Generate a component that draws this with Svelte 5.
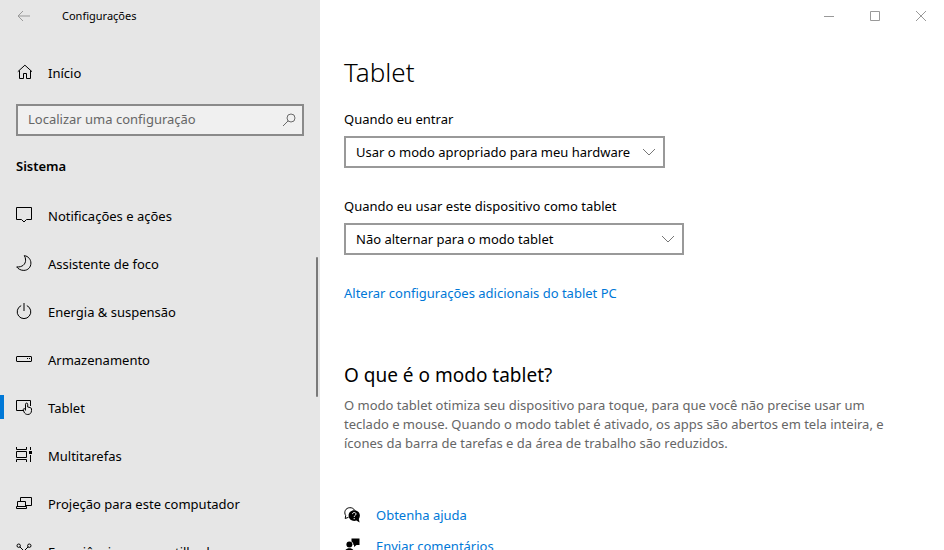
<script lang="ts">
  type NavItem = { id: string; label: string };

  const items: NavItem[] = [
    { id: 'notifications', label: 'Notificações e ações' },
    { id: 'focus', label: 'Assistente de foco' },
    { id: 'power', label: 'Energia & suspensão' },
    { id: 'storage', label: 'Armazenamento' },
    { id: 'tablet', label: 'Tablet' },
    { id: 'multitasking', label: 'Multitarefas' },
    { id: 'projecting', label: 'Projeção para este computador' },
    { id: 'shared', label: 'Experiências compartilhadas' },
  ];

  const signInModes = [
    'Usar o modo apropriado para meu hardware',
    'Sempre usar o modo tablet',
    'Nunca usar o modo tablet',
  ];
  const switchModes = [
    'Não alternar para o modo tablet',
    'Sempre alternar para o modo tablet',
    'Perguntar antes de alternar os modos',
  ];

  let current = $state('tablet');
  let query = $state('');
  let signInMode = $state(signInModes[0]);
  let switchMode = $state(switchModes[0]);
</script>

{#snippet icon(name: string)}
  <svg class="icon" viewBox="0 0 16 16" aria-hidden="true">
    {#if name === 'home'}
      <path d="M1.8 7.7L8.9 1.2L16 7.7M3.5 6.5V14.5H7.5V9.5H10.5V14.5H14.5V6.5" />
    {:else if name === 'notifications'}
      <path d="M.5 .5H15.5V12.5H10.5L8 15L5.5 12.5H.5Z" />
    {:else if name === 'focus'}
      <path d="M8.3 .6C12.3 1.2 14.9 4.4 14.9 8.1C14.9 12.3 11.9 15.4 7.8 15.4C4.8 15.4 2.2 14 .7 11.9C6.2 12.4 9.6 9.3 9.6 5.2C9.6 3.5 9.2 1.9 8.3 .6Z" />
    {:else if name === 'power'}
      <path d="M5.2 2.6A6.8 6.8 0 1 0 10.8 2.6" />
      <path d="M8 0V8" />
    {:else if name === 'storage'}
      <rect x=".5" y="5.5" width="15" height="5" rx=".5" />
      <path d="M11 7.5H12M13 7.5H14" />
    {:else if name === 'tablet'}
      <path d="M7 11.5H.5V1.5H14.5V7" />
      <path d="M9.5 11.5V5.2C9.5 3.7 11.7 3.7 11.7 5.2V8L14.3 8.6C15.1 8.8 15.5 9.3 15.5 10V11.6C15.5 14 14 15.5 11.8 15.5C9.9 15.5 8.6 14.4 8 13L7.3 10.8C7.1 9.4 8.6 9 9.5 10.8" />
    {:else if name === 'multitasking'}
      <path d="M.5 0V2.5H10.5V0M.5 15V12.5H10.5V15M.5 4.5H10.5V10.5H.5ZM14.5 0V3M14.5 8V15" />
      <path class="solid" d="M13 4H16V7H13Z" />
    {:else if name === 'projecting'}
      <path d="M4.5 6V2.5H15.5V10.5H10M1.5 11V6.5H9.5V11M.5 11.5H10.5V13.5H.5Z" />
    {:else if name === 'shared'}
      <circle cx="2.7" cy="2.7" r="1.7" />
      <circle cx="13.3" cy="2.7" r="1.7" />
      <circle cx="2.7" cy="13.3" r="1.7" />
      <circle cx="13.3" cy="13.3" r="1.7" />
      <path d="M3.9 3.9L12.1 12.1M12.1 3.9L3.9 12.1" />
    {:else if name === 'help'}
      <path d="M4.5 10.3L1.2 11.5L1.7 8.6C-.5 5 1.6 .8 5.8 .7C8 .6 9.7 1.6 10.6 3.2" />
      <path class="solid" d="M10.2 3.2C13.4 3.2 15.9 5.6 15.9 8.6C15.9 9.9 15.5 11 14.8 12L15.6 15.5L12.4 13.6C8.6 15 4.6 12.5 4.6 8.6C4.6 5.6 7 3.2 10.2 3.2Z" />
      <path class="cutout" d="M8.5 7.1C8.5 4.9 12 5 12 7.1C12 8.4 10.2 8.3 10.2 9.9M10.2 11V12.2" />
    {:else if name === 'feedback'}
      <path class="solid" d="M7.5 .5H15.5V7H12.5L10 9V7H9.5A3.7 3.7 0 0 0 7.5 3.6Z" />
      <circle class="solid" cx="5.4" cy="6.5" r="3" />
      <path class="solid" d="M.5 15.5C.5 12 2.5 10.2 5.4 10.2S10.3 12 10.3 15.5Z" />
    {/if}
  </svg>
{/snippet}

<div class="window">
  <aside class="sidebar">
    <header class="titlebar">
      <button class="back" aria-label="Voltar">
        <svg viewBox="0 0 14 12" aria-hidden="true"><path d="M6 1L1 6L6 11M1 6H13" /></svg>
      </button>
      <span class="app-name">Configurações</span>
    </header>

    <a class="nav-link home" href="#inicio">{@render icon('home')}<span>Início</span></a>

    <div class="search">
      <input type="text" aria-label="Localizar uma configuração" placeholder="Localizar uma configuração" bind:value={query} />
      <svg viewBox="0 0 14 14" aria-hidden="true"><circle cx="9" cy="5" r="4" /><path d="M6.2 7.8L1 13" /></svg>
    </div>

    <h2 class="group">Sistema</h2>

    <nav>
      {#each items as item (item.id)}
        <a
          class="nav-link"
          class:active={current === item.id}
          href={'#' + item.id}
          onclick={() => (current = item.id)}
        >
          {@render icon(item.id)}<span>{item.label}</span>
        </a>
      {/each}
      <div class="thumb"></div>
    </nav>
  </aside>

  <main>
    <div class="controls">
      <button aria-label="Minimizar"><svg viewBox="0 0 12 12"><path d="M1 6.5H11" /></svg></button>
      <button aria-label="Maximizar"><svg viewBox="0 0 12 12"><path d="M1.5 1.5H10.5V10.5H1.5Z" /></svg></button>
      <button aria-label="Fechar"><svg viewBox="0 0 12 12"><path d="M1 1L11 11M11 1L1 11" /></svg></button>
    </div>

    <div class="content">
      <h1>Tablet</h1>

      <div class="field">
        <label for="sign-in">Quando eu entrar</label>
        <div class="select">
          <select id="sign-in" bind:value={signInMode}>
            {#each signInModes as mode}
              <option value={mode}>{mode}</option>
            {/each}
          </select>
          <svg viewBox="0 0 14 8" aria-hidden="true"><path d="M1 1L7 7L13 1" /></svg>
        </div>
      </div>

      <div class="field">
        <label for="switch">Quando eu usar este dispositivo como tablet</label>
        <div class="select wide">
          <select id="switch" bind:value={switchMode}>
            {#each switchModes as mode}
              <option value={mode}>{mode}</option>
            {/each}
          </select>
          <svg viewBox="0 0 14 8" aria-hidden="true"><path d="M1 1L7 7L13 1" /></svg>
        </div>
      </div>

      <a class="link" href="#avancado">Alterar configurações adicionais do tablet PC</a>

      <section>
        <h2>O que é o modo tablet?</h2>
        <p>
          O modo tablet otimiza seu dispositivo para toque, para que você não precise usar um
          teclado e mouse. Quando o modo tablet é ativado, os apps são abertos em tela inteira, e
          ícones da barra de tarefas e da área de trabalho são reduzidos.
        </p>
      </section>

      <div class="support">
        <a class="link" href="#ajuda">{@render icon('help')}<span>Obtenha ajuda</span></a>
        <a class="link" href="#comentarios">{@render icon('feedback')}<span>Enviar comentários</span></a>
      </div>
    </div>
  </main>
</div>

<style>
  :global(body) {
    margin: 0;
    overflow: hidden;
  }

  .window {
    display: grid;
    grid-template-columns: 320px 1fr;
    height: 100vh;
    overflow: hidden;
    background: #fff;
    color: #000;
    font-family: "Segoe UI", "Noto Sans", "Open Sans", sans-serif;
    font-size: 13px;
    line-height: 20px;
  }

  h1,
  h2,
  p {
    margin: 0;
    font-weight: 400;
  }

  svg {
    flex: none;
    fill: none;
    stroke: currentColor;
  }

  button {
    display: flex;
    align-items: center;
    justify-content: center;
    padding: 0;
    border: 0;
    background: none;
    color: #999;
  }

  .icon {
    width: 16px;
    height: 16px;
  }

  .icon .solid {
    fill: currentColor;
    stroke: none;
  }

  .icon .cutout {
    stroke: #fff;
  }

  /* --- Sidebar --- */
  .sidebar {
    display: flex;
    flex-direction: column;
    min-height: 0;
    background: #e6e6e6;
  }

  .titlebar {
    display: flex;
    align-items: center;
    height: 32px;
    flex: none;
  }

  .back {
    width: 48px;
    height: 32px;
  }

  .back svg {
    width: 14px;
    height: 12px;
  }

  .app-name {
    margin-left: 14px;
    font-size: 11px;
  }

  .nav-link {
    position: relative;
    display: flex;
    align-items: center;
    gap: 16px;
    height: 48px;
    padding: 0 16px;
    color: #000;
    text-decoration: none;
    white-space: nowrap;
  }

  .nav-link .icon {
    margin-bottom: 2px;
  }

  .nav-link.active::before {
    content: "";
    position: absolute;
    left: 0;
    top: 11px;
    width: 4px;
    height: 24px;
    background: #0078d7;
  }

  .home {
    flex: none;
    margin-top: 17px;
  }

  .search {
    display: flex;
    align-items: center;
    flex: none;
    box-sizing: border-box;
    height: 32px;
    margin: 7px 16px 0;
    padding: 0 6px 0 10px;
    border: 2px solid #8a8a8a;
    background: #f0f0f0;
    color: #6b6b6b;
  }

  .search input {
    flex: 1;
    min-width: 0;
    padding: 0 0 2px;
    border: 0;
    outline: none;
    background: none;
    color: #000;
    font: inherit;
  }

  .search input::placeholder {
    color: #666;
    opacity: 1;
  }

  .search svg {
    width: 14px;
    height: 14px;
  }

  .group {
    flex: none;
    margin: 20px 16px 16px;
    font-size: 13px;
    font-weight: 600;
  }

  nav {
    position: relative;
    flex: 1;
    min-height: 0;
    overflow: hidden;
  }

  .thumb {
    position: absolute;
    top: 65px;
    right: 2px;
    width: 2px;
    height: 140px;
    border-radius: 1px;
    background: #7a7a7a;
  }

  /* --- Main pane --- */
  main {
    min-width: 0;
  }

  .controls {
    display: flex;
    justify-content: flex-end;
  }

  .controls button {
    width: 46px;
    height: 32px;
  }

  .controls svg {
    width: 12px;
    height: 12px;
  }

  .content {
    padding: 20px 24px 0;
  }

  h1 {
    font-size: 26px;
    font-weight: 300;
    line-height: 40px;
    margin-bottom: 17px;
  }

  .field {
    margin-bottom: 28px;
  }

  .field label {
    display: block;
    margin-bottom: 7px;
  }

  .select {
    position: relative;
    width: 321px;
  }

  .select.wide {
    width: 340px;
  }

  .select select {
    display: block;
    width: 100%;
    height: 32px;
    padding: 0 30px 0 10px;
    border: 2px solid #999;
    border-radius: 0;
    background: #fff;
    color: #000;
    font: inherit;
    appearance: none;
  }

  .select svg {
    position: absolute;
    right: 9px;
    top: 12px;
    width: 14px;
    height: 8px;
    color: #777;
    pointer-events: none;
  }

  .link {
    color: #0078d7;
    text-decoration: none;
  }

  section {
    max-width: 552px;
    margin-top: 58px;
  }

  section h2 {
    font-size: 19px;
    line-height: 28px;
    margin-bottom: 7px;
  }

  section p {
    color: #666;
    line-height: 19px;
  }

  .support {
    display: flex;
    flex-direction: column;
    gap: 11px;
    margin-top: 52px;
  }

  .support .link {
    display: flex;
    align-items: center;
    gap: 16px;
  }

  .support .icon {
    color: #000;
  }
</style>
